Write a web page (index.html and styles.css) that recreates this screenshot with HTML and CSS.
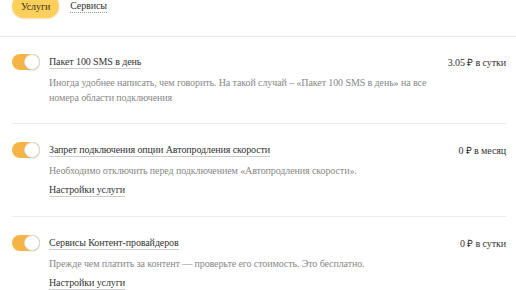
FILE: index.html
```html
<!DOCTYPE html>
<html>
	<head>
		<meta charset="UTF-8">
		<title></title>
		<link rel="stylesheet" href="styles.css">
	</head>
	<body>
		<div class="tabs">
			<a href="javascript:;" class="tab active">Услуги</a>
			<a href="javascript:;" class="tab">Сервисы</a>
		</div>
		<ul class="list">
			<li class="item">
				<span class="toggle"><i></i></span>
				<div class="info">
					<div class="head">
						<a href="javascript:;" class="title">Пакет 100 SMS в день</a>
						<span class="price">3.05 ₽ в сутки</span>
					</div>
					<p class="desc">Иногда удобнее написать, чем говорить. На такой случай – «Пакет 100 SMS в день» на все номера области подключения</p>
				</div>
			</li>
			<li class="item">
				<span class="toggle"><i></i></span>
				<div class="info">
					<div class="head">
						<a href="javascript:;" class="title">Запрет подключения опции Автопродления скорости</a>
						<span class="price">0 ₽ в месяц</span>
					</div>
					<p class="desc">Необходимо отключить перед подключением «Автопродления скорости».</p>
					<a href="javascript:;" class="settings">Настройки услуги</a>
				</div>
			</li>
			<li class="item">
				<span class="toggle"><i></i></span>
				<div class="info">
					<div class="head">
						<a href="javascript:;" class="title">Сервисы Контент-провайдеров</a>
						<span class="price">0 ₽ в сутки</span>
					</div>
					<p class="desc">Прежде чем платить за контент — проверьте его стоимость. Это бесплатно.</p>
					<a href="javascript:;" class="settings">Настройки услуги</a>
				</div>
			</li>
		</ul>
	</body>
</html>
```
FILE: styles.css
```css
*{
    margin: 0;
    padding: 0;
}
body{
    font-family: "Liberation Serif", serif;
    font-size: 10px;
    letter-spacing: -0.1px;
    color: #333;
    background: #fff;
    overflow: hidden;
}
a{
    color: #333;
    text-decoration: none;
}
.tabs{
    display: flex;
    align-items: center;
    gap: 11px;
    margin-top: -6px;
    padding: 0 0 18px 12px;
    border-bottom: 1px solid #e8e8e8;
}
.tab{
    border-bottom: 1px dotted #999;
    line-height: 12px;
}
.tab.active{
    display: block;
    padding: 6px 9px 5px;
    line-height: 13px;
    border: 0;
    border-radius: 12px;
    background: #fcd05a;
    color: #3a3220;
    box-shadow: 0 1px 2px rgba(200,150,30,0.3);
}
.list{
    list-style: none;
    padding: 0 10px 0 12px;
}
.item{
    display: flex;
    gap: 9px;
    padding: 18px 0 19px;
    border-bottom: 1px solid #ececec;
}
.item:first-child{
    padding: 17px 0 18px;
}
.toggle{
    position: relative;
    flex: none;
    width: 28px;
    height: 16px;
    border-radius: 8px;
    background: #f6b447;
}
.toggle i{
    position: absolute;
    right: 0;
    top: 0;
    width: 14px;
    height: 14px;
    border-radius: 50%;
    border: 1px solid #ddd;
    background: #fff;
    box-shadow: 0 1px 1px rgba(0,0,0,0.08);
}
.info{
    flex: 1;
}
.head{
    display: flex;
    justify-content: space-between;
    align-items: center;
    height: 16px;
}
.title{
    border-bottom: 1px solid #ccc;
    line-height: 12px;
}
.price{
    color: #333;
}
.desc{
    max-width: 380px;
    margin-top: 5px;
    color: #888;
    line-height: 15px;
}
.settings{
    display: inline-block;
    margin-top: 6px;
    line-height: 12px;
    border-bottom: 1px solid #ccc;
}
```
